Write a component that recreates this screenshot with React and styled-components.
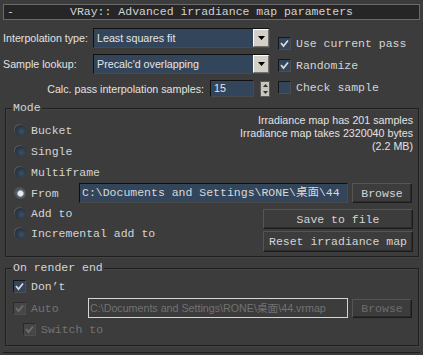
import React from "react";
import styled, { createGlobalStyle } from "styled-components";

const MONO = `"Liberation Mono", "Noto Sans CJK SC", monospace`;
const SANS = `"Liberation Sans", "Noto Sans CJK SC", sans-serif`;

const Global = createGlobalStyle`
  html, body { margin: 0; padding: 0; background: #3c3c3c; }
  #root { width: 423px; height: 355px; overflow: hidden; }
  * { box-sizing: border-box; }
`;

const Panel = styled.div`
  width: 423px;
  height: 355px;
  padding: 4px 3px 0 3px;
  background: #3c3c3c;
  color: #d4d4d4;
  font-family: ${MONO};
  font-size: 11.5px;
  display: flex;
  flex-direction: column;
`;

const TitleBar = styled.div`
  height: 16px;
  border: 1px solid #6a6a6a;
  background: #262626;
  display: grid;
  grid-template-columns: 20px 1fr 20px;
  align-items: center;
  line-height: 14px;
  color: #d2d2d2;
`;

const Minus = styled.span`
  padding-left: 3px;
`;

const Title = styled.span`
  text-align: center;
  white-space: nowrap;
`;

const TopArea = styled.div`
  display: flex;
  margin-top: 8px;
`;

const LeftCol = styled.div`
  width: 267px;
  display: flex;
  flex-direction: column;
  gap: 6px;
`;

const FieldRow = styled.div`
  display: flex;
  align-items: center;
  height: 20px;
`;

const SansLabel = styled.span`
  font-family: ${SANS};
  font-size: 10.7px;
  color: #e2e2e2;
  width: ${(p) => p.$w || "auto"};
  white-space: nowrap;
`;

const SelectBox = styled.div`
  flex: 1;
  height: 20px;
  background: #32455a;
  border-top: 1px solid #111;
  border-left: 1px solid #111;
  border-right: 1px solid #4a4a4a;
  border-bottom: 1px solid #4a4a4a;
  display: flex;
  align-items: center;
  justify-content: space-between;
  padding-left: 3px;
  font-family: ${SANS};
  font-size: 10.7px;
  color: #e6e6e6;
`;

const ArrowButton = styled.div`
  width: 16px;
  height: 18px;
  background: #d4d0c8;
  border-top: 1px solid #ffffff;
  border-left: 1px solid #ffffff;
  border-right: 1px solid #707070;
  border-bottom: 1px solid #707070;
  display: flex;
  align-items: center;
  justify-content: center;
`;

const SpinRow = styled.div`
  display: flex;
  align-items: center;
  justify-content: flex-end;
  height: 17px;
`;

const SpinInput = styled.div`
  width: 44px;
  height: 17px;
  margin-left: 6px;
  background: #32455a;
  border-top: 1px solid #111;
  border-left: 1px solid #111;
  border-right: 1px solid #4a4a4a;
  border-bottom: 1px solid #4a4a4a;
  font-family: ${SANS};
  font-size: 10.7px;
  color: #e6e6e6;
  padding-left: 3px;
  line-height: 15px;
`;

const Spinner = styled.div`
  width: 10px;
  height: 16px;
  margin-left: 6px;
  background: #c9c6c0;
  border: 1px solid #5a5a5a;
  display: flex;
  flex-direction: column;
  align-items: center;
  justify-content: space-around;
`;

const RightCol = styled.div`
  margin-left: 8px;
  padding-top: 4px;
  display: flex;
  flex-direction: column;
`;

const CheckRow = styled.div`
  display: flex;
  align-items: center;
  height: ${(p) => p.$h || 22}px;
  padding-left: ${(p) => p.$indent || 0}px;
  gap: 5px;
  color: ${(p) => (p.$disabled ? "#737373" : "#d4d4d4")};
  white-space: nowrap;
`;

const Box = styled.div`
  width: 13px;
  height: 13px;
  flex: none;
  background: ${(p) => (p.$disabled ? "#464646" : "#32455a")};
  border-top: 1px solid ${(p) => (p.$disabled ? "#2a2a2a" : "#161616")};
  border-left: 1px solid ${(p) => (p.$disabled ? "#2a2a2a" : "#161616")};
  border-right: 1px solid #4e4e4e;
  border-bottom: 1px solid #4e4e4e;
  display: flex;
  align-items: center;
  justify-content: center;
`;

const Group = styled.div`
  position: relative;
  margin: ${(p) => p.$mt}px 1px 0 2px;
  border: 1px solid #1f1f1f;
  box-shadow: inset 1px 1px 0 #444, 1px 1px 0 #444;
  display: flex;
  flex-direction: column;
  padding: ${(p) => p.$pad};
`;

const Legend = styled.span`
  position: absolute;
  top: -8px;
  left: 6px;
  padding: 0 1px;
  background: #3c3c3c;
  line-height: 14px;
  color: #d4d4d4;
`;

const SplitRow = styled.div`
  display: flex;
  justify-content: space-between;
  align-items: flex-start;
`;

const RadioList = styled.div`
  display: flex;
  flex-direction: column;
  padding-top: ${(p) => p.$pt || 0}px;
`;

const RadioRow = styled.div`
  display: flex;
  align-items: center;
  height: ${(p) => p.$h || 21}px;
  padding-left: 9px;
  gap: 5px;
  white-space: nowrap;
`;

const Radio = styled.div`
  width: 11px;
  height: 11px;
  flex: none;
  border-radius: 50%;
  background: ${(p) =>
    p.$on
      ? "radial-gradient(circle at 50% 50%, #f0f0f0 0, #e0e0e0 2.6px, #5a6570 3.6px, #2c3744 100%)"
      : "radial-gradient(circle at 60% 60%, #3d5064 0, #2a3846 55%, #1f2731 100%)"};
  box-shadow: -1px -1px 0 #555;
`;

const Info = styled.div`
  padding: 5px 5px 0 0;
  text-align: right;
  font-family: ${SANS};
  font-size: 10.7px;
  line-height: 13px;
  color: #e2e2e2;
`;

const PathRow = styled.div`
  display: flex;
  align-items: center;
  height: ${(p) => p.$h || 20}px;
  padding: 0 6px 0 ${(p) => p.$pl || 9}px;
  gap: 5px;
`;

const RowLabel = styled.span`
  width: ${(p) => p.$w}px;
  flex: none;
  white-space: nowrap;
  color: ${(p) => (p.$disabled ? "#737373" : "#d4d4d4")};
`;

const PathField = styled.div`
  flex: 1;
  height: 20px;
  overflow: hidden;
  white-space: nowrap;
  line-height: 18px;
  padding-left: 2px;
  margin-left: -5px;
  margin-right: -1px;
  background: #32455a;
  border-top: 1px solid #0e0e0e;
  border-left: 1px solid #0e0e0e;
  border-right: 1px solid #4a4a4a;
  border-bottom: 1px solid #4a4a4a;
  color: #d8d8d8;
`;

const DisabledPath = styled.div`
  flex: 1;
  height: 20px;
  overflow: hidden;
  white-space: nowrap;
  line-height: 18px;
  padding-left: 1px;
  margin-left: -5px;
  margin-right: -1px;
  border: 1px solid #d6d6d6;
  background: #3c3c3c;
  font-family: ${SANS};
  font-size: 10.7px;
  color: #727272;
`;

const Button = styled.div`
  width: ${(p) => p.$w || 60}px;
  height: ${(p) => p.$h || 20}px;
  flex: none;
  display: flex;
  align-items: center;
  justify-content: center;
  white-space: nowrap;
  background: #3c3c3c;
  border-top: 1px solid #555;
  border-left: 1px solid #555;
  border-right: 1px solid #1c1c1c;
  border-bottom: 1px solid #1c1c1c;
  box-shadow: inset -1px -1px 0 #2c2c2c;
  color: ${(p) => (p.$disabled ? "#6c6c6c" : "#d4d4d4")};
`;

const ButtonStack = styled.div`
  display: flex;
  flex-direction: column;
  gap: 2px;
  padding: 6px 5px 4px 0;
`;

const BottomRule = styled.div`
  margin-top: 6px;
  border-top: 1px solid #1e1e1e;
`;

const DownTri = ({ color = "#000" }) => (
  <svg width="7" height="4" viewBox="0 0 7 4">
    <polygon points="0,0 7,0 3.5,4" fill={color} />
  </svg>
);

const UpTri = ({ color = "#333" }) => (
  <svg width="5" height="3" viewBox="0 0 5 3">
    <polygon points="0,3 5,3 2.5,0" fill={color} />
  </svg>
);

const SmallDown = ({ color = "#333" }) => (
  <svg width="5" height="3" viewBox="0 0 5 3">
    <polygon points="0,0 5,0 2.5,3" fill={color} />
  </svg>
);

const Check = ({ color = "#d8d8d8" }) => (
  <svg width="9" height="9" viewBox="0 0 9 9">
    <polyline points="1,4 3.5,7 8,1.5" fill="none" stroke={color} strokeWidth="1.8" />
  </svg>
);

const CheckBox = ({ checked, disabled }) => (
  <Box $disabled={disabled}>{checked && <Check color={disabled ? "#6e6e6e" : "#d8d8d8"} />}</Box>
);

const Select = ({ value }) => (
  <SelectBox>
    <span>{value}</span>
    <ArrowButton>
      <DownTri />
    </ArrowButton>
  </SelectBox>
);

export default function App() {
  return (
    <>
      <Global />
      <Panel>
        <TitleBar>
          <Minus>-</Minus>
          <Title>VRay:: Advanced irradiance map parameters</Title>
          <span />
        </TitleBar>

        <TopArea>
          <LeftCol>
            <FieldRow>
              <SansLabel $w="90px">Interpolation type:</SansLabel>
              <Select value="Least squares fit" />
            </FieldRow>
            <FieldRow>
              <SansLabel $w="90px">Sample lookup:</SansLabel>
              <Select value="Precalc'd overlapping" />
            </FieldRow>
            <SpinRow>
              <SansLabel>Calc. pass interpolation samples:</SansLabel>
              <SpinInput>15</SpinInput>
              <Spinner>
                <UpTri />
                <SmallDown />
              </Spinner>
            </SpinRow>
          </LeftCol>
          <RightCol>
            <CheckRow>
              <CheckBox checked />
              <span>Use current pass</span>
            </CheckRow>
            <CheckRow>
              <CheckBox checked />
              <span>Randomize</span>
            </CheckRow>
            <CheckRow>
              <CheckBox />
              <span>Check sample</span>
            </CheckRow>
          </RightCol>
        </TopArea>

        <Group $mt={10} $pad="0">
          <Legend>Mode</Legend>
          <SplitRow>
            <RadioList $pt={11}>
              <RadioRow>
                <Radio />
                <span>Bucket</span>
              </RadioRow>
              <RadioRow>
                <Radio />
                <span>Single</span>
              </RadioRow>
              <RadioRow>
                <Radio />
                <span>Multiframe</span>
              </RadioRow>
            </RadioList>
            <Info>
              Irradiance map has 201 samples
              <br />
              Irradiance map takes 2320040 bytes
              <br />
              (2.2 MB)
            </Info>
          </SplitRow>
          <PathRow>
            <Radio $on />
            <RowLabel $w={48}>From</RowLabel>
            <PathField>C:\Documents and Settings\RONE\桌面\44</PathField>
            <Button $w={60}>Browse</Button>
          </PathRow>
          <SplitRow>
            <RadioList>
              <RadioRow $h={20}>
                <Radio />
                <span>Add to</span>
              </RadioRow>
              <RadioRow $h={20}>
                <Radio />
                <span>Incremental add to</span>
              </RadioRow>
            </RadioList>
            <ButtonStack>
              <Button $w={150} $h={20}>Save to file</Button>
              <Button $w={150} $h={21}>Reset irradiance map</Button>
            </ButtonStack>
          </SplitRow>
        </Group>

        <Group $mt={11} $pad="7px 0 5px 0">
          <Legend>On render end</Legend>
          <CheckRow $h={21} $indent={7}>
            <CheckBox checked />
            <span>Don’t</span>
          </CheckRow>
          <PathRow $h={22} $pl={7}>
            <CheckBox checked disabled />
            <RowLabel $w={57} $disabled>
              Auto
            </RowLabel>
            <DisabledPath>C:\Documents and Settings\RONE\桌面\44.vrmap</DisabledPath>
            <Button $w={60} $h={19} $disabled>
              Browse
            </Button>
          </PathRow>
          <CheckRow $h={21} $indent={17} $disabled>
            <CheckBox checked disabled />
            <span>Switch to</span>
          </CheckRow>
        </Group>
        <BottomRule />
      </Panel>
    </>
  );
}
